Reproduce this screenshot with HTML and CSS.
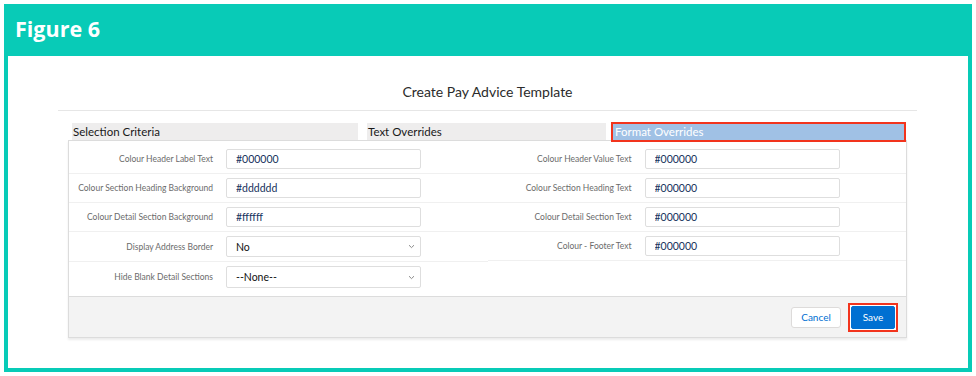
FILE: index.html
```html
<!DOCTYPE html>
<html lang="en">
<head>
    <meta charset="UTF-8">
    <meta name="viewport" content="width=device-width, initial-scale=1.0">
    <title>Figure 6 - Create Pay Advice Template</title>
    <link rel="stylesheet" href="styles.css">
</head>
<body>
    <div class="figure">
        <div class="figure-head">Figure 6</div>
        <div class="figure-body">
            <div class="page-title">Create Pay Advice Template</div>

            <div class="tabs">
                <div class="tab">Selection Criteria</div>
                <div class="tab">Text Overrides</div>
                <div class="tab active">Format Overrides</div>
            </div>

            <div class="card">
                <div class="card-body">
                    <div class="col">
                        <div class="row">
                            <label>Colour Header Label Text</label>
                            <input type="text" value="#000000">
                        </div>
                        <div class="row">
                            <label>Colour Section Heading Background</label>
                            <input type="text" value="#dddddd">
                        </div>
                        <div class="row">
                            <label>Colour Detail Section Background</label>
                            <input type="text" value="#ffffff">
                        </div>
                        <div class="row">
                            <label>Display Address Border</label>
                            <div class="select">
                                <span>No</span>
                                <svg width="7" height="5" viewBox="0 0 7 5"><path d="M1 1.2 L3.5 3.6 L6 1.2" fill="none" stroke="#8a8a8a" stroke-width="1"/></svg>
                            </div>
                        </div>
                        <div class="row last">
                            <label>Hide Blank Detail Sections</label>
                            <div class="select">
                                <span>--None--</span>
                                <svg width="7" height="5" viewBox="0 0 7 5"><path d="M1 1.2 L3.5 3.6 L6 1.2" fill="none" stroke="#8a8a8a" stroke-width="1"/></svg>
                            </div>
                        </div>
                    </div>
                    <div class="col">
                        <div class="row">
                            <label>Colour Header Value Text</label>
                            <input type="text" value="#000000">
                        </div>
                        <div class="row">
                            <label>Colour Section Heading Text</label>
                            <input type="text" value="#000000">
                        </div>
                        <div class="row">
                            <label>Colour Detail Section Text</label>
                            <input type="text" value="#000000">
                        </div>
                        <div class="row">
                            <label>Colour - Footer Text</label>
                            <input type="text" value="#000000">
                        </div>
                    </div>
                </div>
                <div class="card-footer">
                    <button class="btn cancel">Cancel</button>
                    <span class="highlight"><button class="btn save">Save</button></span>
                </div>
            </div>
        </div>
    </div>
</body>
</html>
```

FILE: styles.css
```css
body {
    margin: 0;
    padding: 0;
    background: #fff;
    font-family: Lato, "Open Sans", Arial, sans-serif;
}
.figure {
    margin: 4px;
    background: #08cbb7;
    padding: 0 4px 4px 4px;
}
.figure-head {
    height: 52px;
    box-sizing: border-box;
    padding: 10px 0 0 7px;
    color: #fff;
    font-family: "Open Sans", Arial, sans-serif;
    font-weight: 700;
    font-size: 21.5px;
    line-height: 30px;
}
.figure-body {
    background: #fff;
    height: 312px;
    overflow: hidden;
}
.page-title {
    margin: 0 51px 0 50px;
    padding: 26px 0 8px 0;
    line-height: 20px;
    text-align: center;
    font-size: 14px;
    color: #2b2b2b;
    border-bottom: 1px solid #e6e6e6;
}
.tabs {
    display: flex;
    align-items: flex-start;
    height: 18px;
    margin: 11px 0 0 64px;
    position: relative;
    z-index: 1;
}
.tab {
    margin-top: 1px;
    height: 17px;
    line-height: 18px;
    padding-left: 1px;
    font-size: 11.5px;
    color: #181818;
    background: #eeeded;
}
.tab:nth-child(1) {
    width: 285px;
    margin-right: 9px;
}
.tab:nth-child(2) {
    width: 238px;
    margin-right: 5px;
}
.tab.active {
    margin-top: 0;
    width: 289px;
    height: 16px;
    line-height: 16px;
    padding-left: 2px;
    background: #a0c1e5;
    color: #fff;
    border: 2px solid #f2341d;
}
.card {
    margin: 0 61px 0 60px;
    border: 1px solid #dcdcdc;
    box-shadow: 0 2px 2px rgba(0,0,0,0.08);
}
.card-body {
    display: flex;
    padding: 4px 0 4px 0;
}
.col {
    flex: 1;
}
.row {
    display: flex;
    align-items: center;
    padding: 4px 0;
    border-bottom: 1px solid #f0f0f0;
}
.row.last {
    border-bottom: none;
}
.row label {
    width: 144px;
    text-align: right;
    margin-right: 13px;
    font-size: 8.5px;
    color: #6b6b6b;
}
.row input,
.select {
    box-sizing: border-box;
    width: 195px;
    height: 20px;
    border: 1px solid #dedede;
    border-radius: 2px;
    background: #fff;
    padding: 0 9px;
    font-family: Lato, "Open Sans", Arial, sans-serif;
    font-size: 10.5px;
    color: #16325c;
    outline: none;
}
.select {
    display: flex;
    align-items: center;
    justify-content: space-between;
    height: 21px;
    color: #111;
    padding: 0 5px 0 9px;
}
.row.last .select {
    height: 22px;
}
.card-footer {
    display: flex;
    justify-content: flex-end;
    align-items: center;
    gap: 7px;
    height: 40px;
    padding-right: 8px;
    background: #f3f3f3;
    border-top: 1px solid #dcdcdc;
}
.btn {
    height: 21px;
    border-radius: 3px;
    font-family: Lato, "Open Sans", Arial, sans-serif;
    font-size: 10px;
    cursor: pointer;
}
.cancel {
    width: 50px;
    background: #fff;
    border: 1px solid #dddbda;
    color: #0070d2;
}
.highlight {
    display: flex;
    padding: 1px;
    border: 2px solid #f2341d;
    background: #fff;
}
.save {
    width: 44px;
    height: 23px;
    border-radius: 2px;
    background: #0070d2;
    border: 1px solid #0070d2;
    color: #fff;
}
```
